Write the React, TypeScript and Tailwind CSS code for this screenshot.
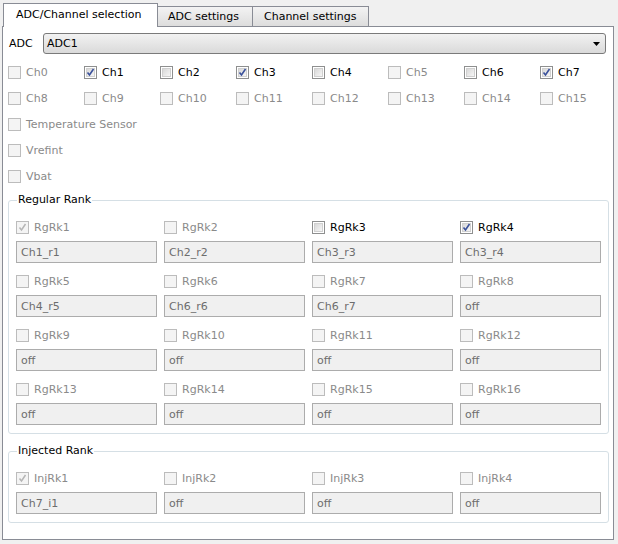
import React from "react";

type Box = { label: string; checked?: boolean; enabled?: boolean };

const channels: Box[] = [
  { label: "Ch0" },
  { label: "Ch1", checked: true, enabled: true },
  { label: "Ch2", enabled: true },
  { label: "Ch3", checked: true, enabled: true },
  { label: "Ch4", enabled: true },
  { label: "Ch5" },
  { label: "Ch6", enabled: true },
  { label: "Ch7", checked: true, enabled: true },
  { label: "Ch8" },
  { label: "Ch9" },
  { label: "Ch10" },
  { label: "Ch11" },
  { label: "Ch12" },
  { label: "Ch13" },
  { label: "Ch14" },
  { label: "Ch15" },
];

const regular: { box: Box; value: string }[] = [
  { box: { label: "RgRk1", checked: true }, value: "Ch1_r1" },
  { box: { label: "RgRk2" }, value: "Ch2_r2" },
  { box: { label: "RgRk3", enabled: true }, value: "Ch3_r3" },
  { box: { label: "RgRk4", checked: true, enabled: true }, value: "Ch3_r4" },
  { box: { label: "RgRk5" }, value: "Ch4_r5" },
  { box: { label: "RgRk6" }, value: "Ch6_r6" },
  { box: { label: "RgRk7" }, value: "Ch6_r7" },
  { box: { label: "RgRk8" }, value: "off" },
  { box: { label: "RgRk9" }, value: "off" },
  { box: { label: "RgRk10" }, value: "off" },
  { box: { label: "RgRk11" }, value: "off" },
  { box: { label: "RgRk12" }, value: "off" },
  { box: { label: "RgRk13" }, value: "off" },
  { box: { label: "RgRk14" }, value: "off" },
  { box: { label: "RgRk15" }, value: "off" },
  { box: { label: "RgRk16" }, value: "off" },
];

const injected: { box: Box; value: string }[] = [
  { box: { label: "InjRk1", checked: true }, value: "Ch7_i1" },
  { box: { label: "InjRk2" }, value: "off" },
  { box: { label: "InjRk3" }, value: "off" },
  { box: { label: "InjRk4" }, value: "off" },
];

function Check({ label, checked, enabled }: Box) {
  return (
    <div className="flex items-center h-full">
      {enabled ? (
        <div className="w-[13px] h-[13px] border border-[#8e8f8f] bg-white p-px shrink-0">
          <div className="w-full h-full border border-[#d0d0d0] bg-gradient-to-br from-[#d8d8d8] to-[#f6f6f6] relative">
            {checked && (
              <svg className="absolute -left-[2px] -top-[2px]" width="11" height="11" viewBox="0 0 11 11">
                <path d="M2.5 5.5 L4.5 8 L8.5 2" fill="none" stroke="#3a519b" strokeWidth="1.6" />
              </svg>
            )}
          </div>
        </div>
      ) : (
        <div className="w-[13px] h-[13px] border border-[#bcbcbc] bg-[#f4f4f4] shrink-0 relative">
          {checked && (
            <svg className="absolute left-0 top-0" width="11" height="11" viewBox="0 0 11 11">
              <path d="M2.5 5.5 L4.5 8 L8.5 2" fill="none" stroke="#b5b5b5" strokeWidth="1.5" />
            </svg>
          )}
        </div>
      )}
      <span className={`ml-[5px] pt-[2px] whitespace-nowrap ${enabled ? "text-black" : "text-[#8a8a8a]"}`}>{label}</span>
    </div>
  );
}

function Field({ value }: { value: string }) {
  return (
    <div className="h-[22px] w-[141px] border border-[#acacac] bg-[#f0f0f0] pl-[4px] pt-[2px] flex items-center text-[#6d6d6d]">
      {value}
    </div>
  );
}

function Group({ title, items }: { title: string; items: { box: Box; value: string }[] }) {
  return (
    <fieldset className="ml-[5px] w-[601px] border border-[#d5dfe5] rounded-[3px] pl-[7px] pt-[6px] pb-[8px]">
      <legend className="ml-[1px] px-[1px] leading-[14px] text-black">{title}</legend>
      <div className="grid grid-cols-4 gap-x-[7px] gap-y-[4px] w-[585px]">
        {items.map((it) => (
          <div key={it.box.label} className="flex flex-col">
            <div className="h-[28px]">
              <Check {...it.box} />
            </div>
            <Field value={it.value} />
          </div>
        ))}
      </div>
    </fieldset>
  );
}

export default function App() {
  return (
    <div className="w-[618px] h-[544px] bg-[#f0f0f0] pl-[2px] pt-[3px] text-[11px] font-['DejaVu_Sans',Verdana,sans-serif] overflow-hidden">
      <div className="flex items-end h-[23px]">
        <div className="ml-px h-[24px] w-[155px] -mb-px relative z-10 bg-white border border-b-0 border-[#898c95] flex items-center pl-[12px] text-black">
          ADC/Channel selection
        </div>
        <div className="h-[20px] w-[95px] bg-gradient-to-b from-[#f3f3f3] to-[#dddddd] border border-b-0 border-l-0 border-[#898c95] flex items-center pl-[10px] pt-[2px] text-black">
          ADC settings
        </div>
        <div className="h-[20px] w-[116px] bg-gradient-to-b from-[#f3f3f3] to-[#dddddd] border border-b-0 border-l-0 border-[#898c95] flex items-center pl-[11px] pt-[2px] text-black">
          Channel settings
        </div>
      </div>
      <div className="w-[612px] h-[514px] border border-[#898c95] bg-white">
        <div className="flex items-center mt-[6px] pl-[6px]">
          <span className="w-[34px] pt-px">ADC</span>
          <div className="w-[563px] h-[21px] rounded-[3px] border border-[#7a7a7a] bg-gradient-to-b from-[#f2f2f2] to-[#dadada] flex items-center justify-between pl-[3px] pr-[5px]">
            <span className="pt-px">ADC1</span>
            <svg width="7" height="4" viewBox="0 0 7 4">
              <path d="M0 0 H7 L3.5 4 Z" fill="#000" />
            </svg>
          </div>
        </div>
        <div className="mt-[5px] pl-[5px] grid grid-cols-[repeat(8,76px)]">
          {channels.map((c) => (
            <div key={c.label} className="h-[26px]">
              <Check {...c} />
            </div>
          ))}
        </div>
        <div className="pl-[5px]">
          <div className="h-[26px]"><Check label="Temperature Sensor" /></div>
          <div className="h-[26px]"><Check label="Vrefint" /></div>
          <div className="h-[26px]"><Check label="Vbat" /></div>
        </div>
        <div className="mt-[4px]">
          <Group title="Regular Rank" items={regular} />
        </div>
        <div className="mt-[10px]">
          <Group title="Injected Rank" items={injected} />
        </div>
      </div>
    </div>
  );
}
